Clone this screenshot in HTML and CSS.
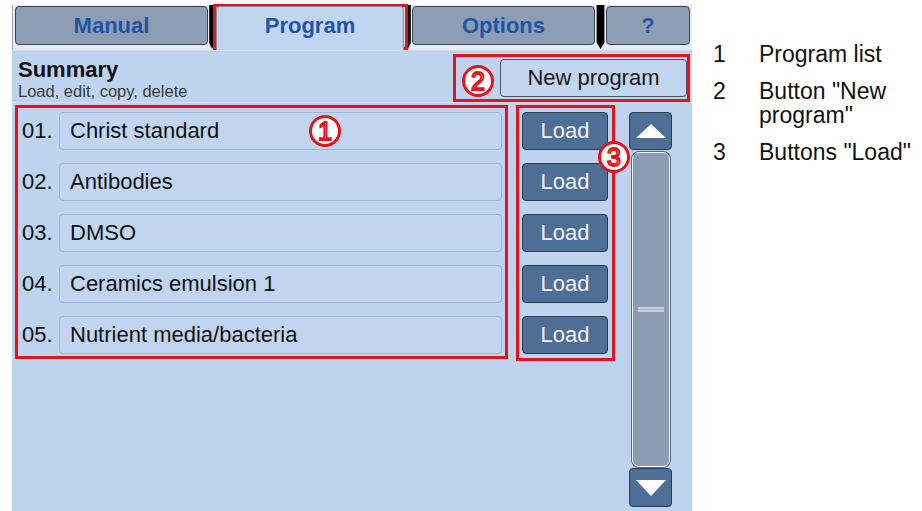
FILE: index.html
```html
<!DOCTYPE html>
<html>
<head>
<meta charset="utf-8">
<link rel="stylesheet" href="styles.css">
</head>
<body>
<div class="page">
  <div class="device">
    <div class="tabbar">
      <div class="tab tab-manual">Manual</div>
      <div class="sep"></div>
      <div class="tab tab-active">Program</div>
      <div class="sep"></div>
      <div class="tab tab-options">Options</div>
      <div class="sep sep-wide"></div>
      <div class="tab tab-help">?</div>
    </div>
    <div class="content">
      <div class="header">
        <div class="titles">
          <div class="title">Summary</div>
          <div class="subtitle">Load, edit, copy, delete</div>
        </div>
        <div class="btn-new">New program</div>
      </div>
      <div class="body">
        <div class="list">
          <div class="row"><span class="num">01.</span><div class="name">Christ standard</div><div class="load">Load</div></div>
          <div class="row"><span class="num">02.</span><div class="name">Antibodies</div><div class="load">Load</div></div>
          <div class="row"><span class="num">03.</span><div class="name">DMSO</div><div class="load">Load</div></div>
          <div class="row"><span class="num">04.</span><div class="name">Ceramics emulsion 1</div><div class="load">Load</div></div>
          <div class="row"><span class="num">05.</span><div class="name">Nutrient media/bacteria</div><div class="load">Load</div></div>
        </div>
        <div class="scroll">
          <div class="arrow arrow-up">
            <svg width="32" height="16" viewBox="0 0 32 16"><polygon points="16,1 31,15 1,15" fill="#ffffff"/></svg>
          </div>
          <div class="track"><span class="grip"></span></div>
          <div class="arrow arrow-down">
            <svg width="30" height="17" viewBox="0 0 30 17"><polygon points="0,1 30,1 15,17" fill="#ffffff"/></svg>
          </div>
        </div>
      </div>
    </div>

    <div class="ann ann-tab"></div>
    <div class="ann ann-new"></div>
    <div class="ann ann-list"></div>
    <div class="ann ann-load"></div>
    <div class="badge badge-1">1</div>
    <div class="badge badge-2">2</div>
    <div class="badge badge-3">3</div>
  </div>

  <ul class="legend">
    <li><span class="ln">1</span><span class="lt">Program list</span></li>
    <li><span class="ln">2</span><span class="lt">Button "New program"</span></li>
    <li><span class="ln">3</span><span class="lt">Buttons "Load"</span></li>
  </ul>
</div>
</body>
</html>
```

FILE: styles.css
```css
* { box-sizing: border-box; }
html, body { margin: 0; background: #ffffff; }
body { font-family: "Liberation Sans", Arial, sans-serif; }

.page {
  display: flex;
  padding: 5px 0 0 12px;
  height: 511px;
  overflow: hidden;
}

.device {
  position: relative;
  flex: none;
  width: 680px;
  height: 506px;
  display: flex;
  flex-direction: column;
}

/* tabs */
.tabbar {
  flex: none;
  height: 45px;
  display: flex;
  background: #e6ebf2;
  padding: 1px 2px 0 2px;
  border-left: 1px solid #9aa6b6;
}
.tab {
  flex: none;
  height: 39px;
  border: 1px solid #3c4654;
  border-radius: 4px;
  background: #8d9db4;
  color: #1e55a6;
  font-weight: bold;
  font-size: 22px;
  display: flex;
  align-items: center;
  justify-content: center;
}
.tab-manual { width: 193px; }
.tab-active {
  width: 188px;
  height: 44px;
  padding-bottom: 5px;
  background: #c0d5f0;
  border-color: #7f8fa6;
  border-bottom: none;
  border-radius: 4px 4px 0 0;
  position: relative;
  z-index: 1;
}
.tab-options { width: 183px; }
.tab-help { width: 84px; }
.sep {
  flex: none;
  width: 8px;
  height: 44px;
  margin-top: -1px;
  background: #000000;
  clip-path: polygon(15% 0, 85% 0, 85% 86%, 50% 100%, 15% 86%);
}
.sep-wide { width: 11px; }

/* content */
.content {
  flex: 1;
  background: #bed3ee;
  border-top: 1px solid #d3deec;
  display: flex;
  flex-direction: column;
}
.header {
  flex: none;
  height: 52px;
  display: flex;
  justify-content: space-between;
  align-items: flex-start;
  padding: 7px 5px 0 6px;
  border-bottom: 1px solid #d6e1ef;
}
.title {
  font-size: 22px;
  font-weight: bold;
  line-height: 23px;
  color: #111111;
}
.subtitle {
  margin-top: 1px;
  font-size: 16.5px;
  line-height: 18px;
  color: #3a3a3a;
}
.btn-new {
  margin-top: 1px;
  width: 187px;
  height: 38px;
  background: #c3d6f0;
  border: 1px solid #4b5566;
  border-radius: 4px;
  font-size: 22px;
  color: #1a1a1a;
  display: flex;
  align-items: center;
  justify-content: center;
}

.body {
  flex: 1;
  display: flex;
  padding-top: 9px;
}
.list {
  display: flex;
  flex-direction: column;
  gap: 13px;
  padding-left: 10px;
}
.row {
  display: flex;
  align-items: center;
  height: 38px;
}
.num {
  width: 37px;
  font-size: 22px;
  color: #111111;
}
.name {
  width: 443px;
  height: 38px;
  border: 1px solid #a3b6d0;
  border-radius: 4px;
  background: #c1d5f0;
  padding-left: 10px;
  font-size: 22px;
  color: #111111;
  display: flex;
  align-items: center;
}
.load {
  margin-left: 20px;
  width: 86px;
  height: 38px;
  background: #4e6e96;
  border: 1px solid #2a3b52;
  border-radius: 4px;
  color: #eef2f7;
  font-size: 22px;
  display: flex;
  align-items: center;
  justify-content: center;
}

/* scrollbar */
.scroll {
  margin-left: 21px;
  width: 43px;
  height: 395px;
  display: flex;
  flex-direction: column;
}
.arrow {
  flex: none;
  height: 38px;
  background: #4e6e96;
  border: 1px solid #2a3b52;
  border-radius: 4px;
  display: flex;
  align-items: center;
  justify-content: center;
}
.arrow-down { height: 39px; margin-top: 1px; }
.track {
  flex: none;
  height: 315px;
  margin: 2px 2px 0 3px;
  background: #8b9cb3;
  border: 1px solid #f2f5f9;
  border-radius: 7px;
  box-shadow: 0 0 0 1px #5d6b80;
  display: flex;
  align-items: center;
  justify-content: center;
}
.grip {
  width: 26px;
  height: 5px;
  border-top: 2px solid #c8d0dc;
  border-bottom: 2px solid #c8d0dc;
  background: #aab6c6;
}

/* annotations */
.ann {
  position: absolute;
  border: 3px solid #e8121b;
}
.ann-tab { left: 201px; top: -1px; width: 195px; height: 46px; }
.ann-new { left: 441px; top: 49px; width: 237px; height: 48px; }
.ann-list { left: 3px; top: 100px; width: 493px; height: 254px; }
.ann-load { left: 504px; top: 100px; width: 99px; height: 256px; }

.badge {
  position: absolute;
  width: 32px;
  height: 32px;
  border-radius: 50%;
  border: 3px solid #e8121b;
  background: #ffffff;
  display: flex;
  align-items: center;
  justify-content: center;
  font-size: 25px;
  line-height: 1;
  color: #ffffff;
  -webkit-text-stroke: 1.8px #e8121b;
}
.badge-1 { left: 297px; top: 110px; }
.badge-2 { left: 450px; top: 60px; }
.badge-3 { left: 586px; top: 136px; }

/* legend */
.legend {
  list-style: none;
  margin: 37px 0 0 21px;
  padding: 0;
  width: 209px;
  font-size: 23px;
  line-height: 24px;
  color: #111111;
}
.legend li {
  display: flex;
  margin-bottom: 13px;
}
.ln { flex: none; width: 46px; }
.lt { flex: 1; }
```
